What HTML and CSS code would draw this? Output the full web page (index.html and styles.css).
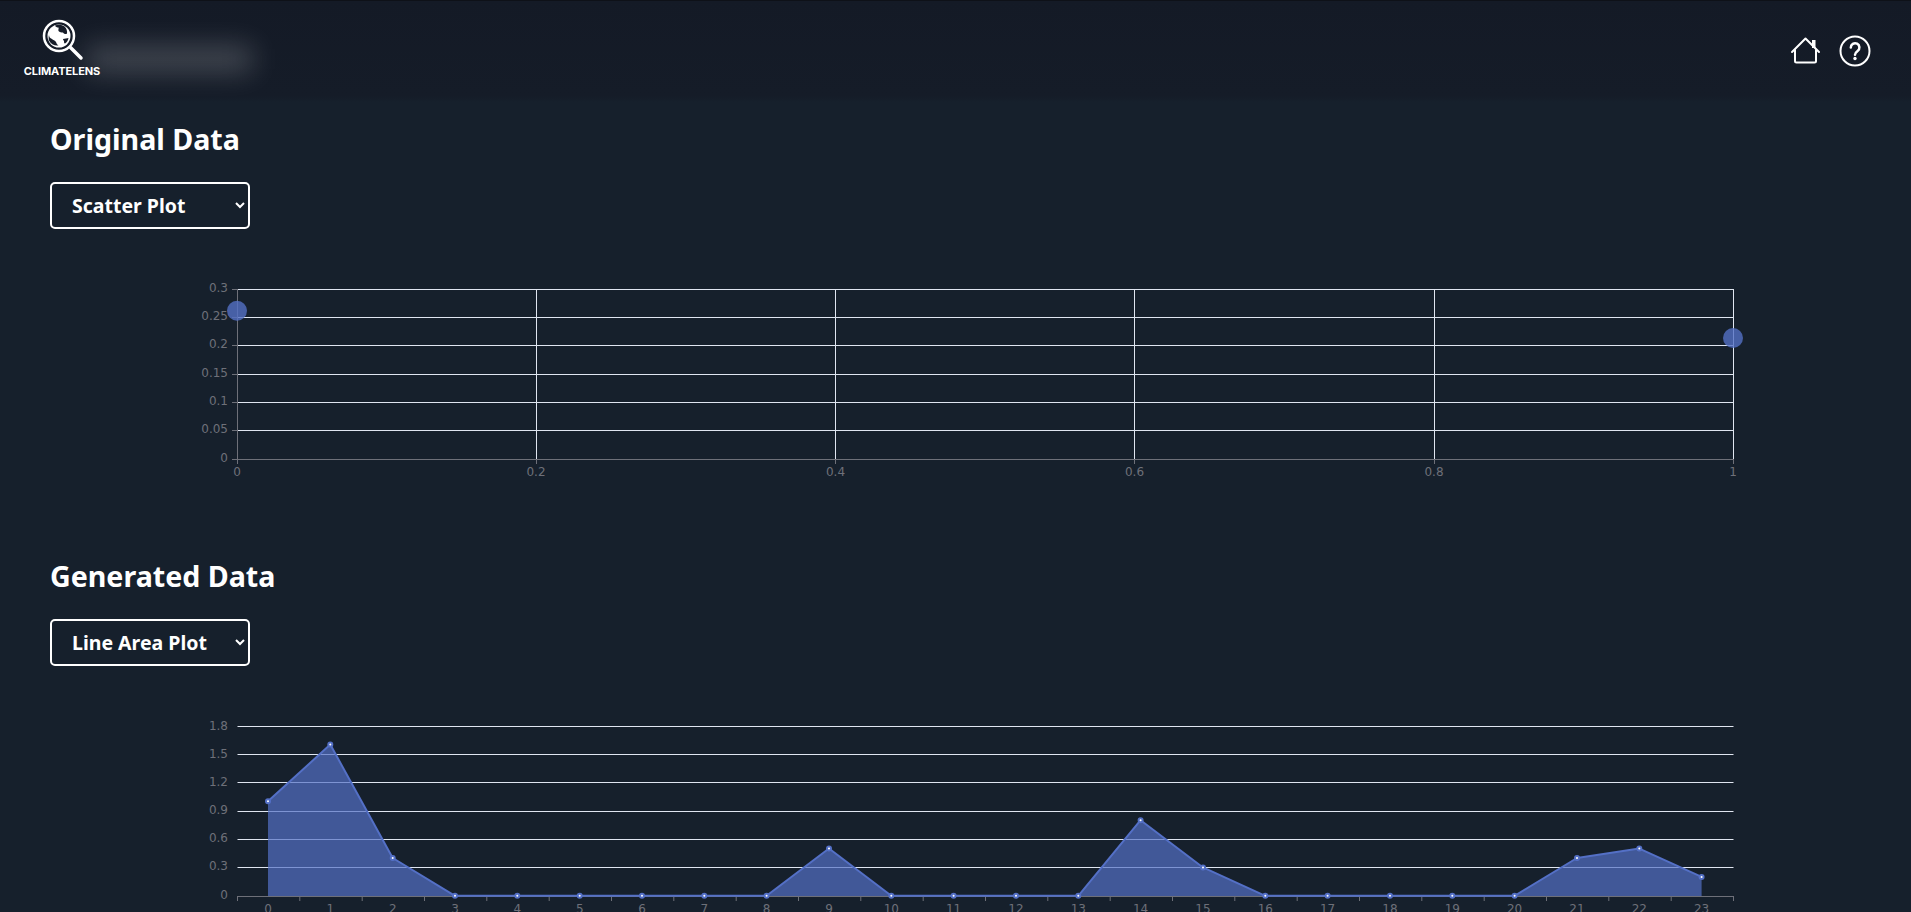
FILE: index.html

```html
<!DOCTYPE html>
<html lang="en">
<head>
  <meta charset="UTF-8" />
  <meta name="viewport" content="width=device-width, initial-scale=1" />
  <title>ClimateLens</title>
  <link rel="stylesheet" href="styles.css">
</head>
<body>

  <header class="topbar">
    <div class="brand">
      <svg class="brand-icon" viewBox="0 0 44 44" aria-hidden="true">
        <circle class="lens" cx="18" cy="18" r="15" />
        <circle class="globe" cx="18" cy="18" r="11.500" />
        <path class="land" d="M14 7.500c3-1.500 7-1 9.500 1 2 2 3 4.500 2.500 7-1.500 1-3 .5-4-1-1.500 0-3.500 0-4.500-1.500-.5-1.500 .5-2.500 0-3.500-1.500 0-3-.5-3.500-2z" />
        <path class="land" d="M8 17c0 2 1 3 3 4 1 1 3 1.500 4 3 .5 1.500 1 2.500 2.500 3.500-4 .5-8-1.500-9.500-5-.5-1.500-.5-4 0-5.500z" />
        <path class="land" d="M22 21c2-.5 4-.5 5.500-1-.5 2.500-1.500 4.500-3.500 5.500-1 0-1-1.500-1-2.500-.5-.5-1-1.500-1-2z" />
        <path class="handle" d="M29.500 29.500 L40 40" />
      </svg>
      <span class="brand-name">CLIMATELENS</span>
    </div>
    <div class="blurred"></div>

    <nav class="top-icons">
      <svg class="icon" viewBox="0 0 32 32" aria-label="Home">
        <path d="M2 17 L15.500 3.500 L29 17" />
        <path d="M5 15 V26 Q5 27.500 6.500 27.500 H24.500 Q26 27.500 26 26 V15" />
        <rect class="solid" x="22" y="5" width="3.500" height="8" />
      </svg>
      <svg class="icon" viewBox="0 0 32 32" aria-label="Help">
        <circle cx="16" cy="16" r="14.500" />
        <path class="mark" d="M11.800 12.500 a4.300 4.300 0 1 1 6.800 3.500 c-1.800 1.300 -2.600 2 -2.600 3.800" />
        <circle class="solid" cx="16" cy="23.500" r="1.700" />
      </svg>
    </nav>
  </header>

  <main>
    <section class="panel">
      <h2>Original Data</h2>
      <select class="plot-select">
        <option selected>Scatter Plot</option>
        <option>Line Area Plot</option>
      </select>

      <svg class="chart" viewBox="0 0 1811 260">
        <g class="split">
          <line x1="187.500" x2="1683.500" y1="40.500" y2="40.500" />
          <line x1="187.500" x2="1683.500" y1="68.500" y2="68.500" />
          <line x1="187.500" x2="1683.500" y1="96.500" y2="96.500" />
          <line x1="187.500" x2="1683.500" y1="125.500" y2="125.500" />
          <line x1="187.500" x2="1683.500" y1="153.500" y2="153.500" />
          <line x1="187.500" x2="1683.500" y1="181.500" y2="181.500" />
          <line x1="486.500" x2="486.500" y1="40" y2="210" />
          <line x1="785.500" x2="785.500" y1="40" y2="210" />
          <line x1="1084.500" x2="1084.500" y1="40" y2="210" />
          <line x1="1384.500" x2="1384.500" y1="40" y2="210" />
          <line x1="1683.500" x2="1683.500" y1="40" y2="210" />
        </g>
        <g class="axis">
          <line x1="187.500" x2="187.500" y1="40" y2="210.500" />
          <line x1="187" x2="1684" y1="210.500" y2="210.500" />
          <line x1="182" x2="187" y1="40.500" y2="40.500" />
          <line x1="182" x2="187" y1="68.500" y2="68.500" />
          <line x1="182" x2="187" y1="96.500" y2="96.500" />
          <line x1="182" x2="187" y1="125.500" y2="125.500" />
          <line x1="182" x2="187" y1="153.500" y2="153.500" />
          <line x1="182" x2="187" y1="181.500" y2="181.500" />
          <line x1="182" x2="187" y1="210.500" y2="210.500" />
          <line x1="187.500" x2="187.500" y1="210" y2="215" />
          <line x1="486.500" x2="486.500" y1="210" y2="215" />
          <line x1="785.500" x2="785.500" y1="210" y2="215" />
          <line x1="1084.500" x2="1084.500" y1="210" y2="215" />
          <line x1="1384.500" x2="1384.500" y1="210" y2="215" />
          <line x1="1683.500" x2="1683.500" y1="210" y2="215" />
        </g>
        <g class="labels y-labels">
          <text x="178" y="43">0.3</text>
          <text x="178" y="71">0.25</text>
          <text x="178" y="99">0.2</text>
          <text x="178" y="128">0.15</text>
          <text x="178" y="156">0.1</text>
          <text x="178" y="184">0.05</text>
          <text x="178" y="213">0</text>
        </g>
        <g class="labels x-labels">
          <text x="187" y="227">0</text>
          <text x="486" y="227">0.2</text>
          <text x="785.500" y="227">0.4</text>
          <text x="1084.500" y="227">0.6</text>
          <text x="1384" y="227">0.8</text>
          <text x="1683" y="227">1</text>
        </g>
        <circle class="scatter-dot" cx="187" cy="61.700" r="10" />
        <circle class="scatter-dot" cx="1683" cy="89" r="10" />
      </svg>
    </section>

    <section class="panel">
      <h2>Generated Data</h2>
      <select class="plot-select">
        <option>Scatter Plot</option>
        <option selected>Line Area Plot</option>
      </select>

      <svg class="chart" viewBox="0 0 1811 260">
        <g class="split">
          <line x1="187.500" x2="1683.500" y1="40.500" y2="40.500" />
          <line x1="187.500" x2="1683.500" y1="68.500" y2="68.500" />
          <line x1="187.500" x2="1683.500" y1="96.500" y2="96.500" />
          <line x1="187.500" x2="1683.500" y1="125.500" y2="125.500" />
          <line x1="187.500" x2="1683.500" y1="153.500" y2="153.500" />
          <line x1="187.500" x2="1683.500" y1="181.500" y2="181.500" />
        </g>
        <g class="axis">
          <line x1="187" x2="1684" y1="210.500" y2="210.500" />
          <line x1="187.500" x2="187.500" y1="210" y2="215" />
          <line x1="249.800" x2="249.800" y1="210" y2="215" />
          <line x1="312.200" x2="312.200" y1="210" y2="215" />
          <line x1="374.500" x2="374.500" y1="210" y2="215" />
          <line x1="436.800" x2="436.800" y1="210" y2="215" />
          <line x1="499.200" x2="499.200" y1="210" y2="215" />
          <line x1="561.500" x2="561.500" y1="210" y2="215" />
          <line x1="623.800" x2="623.800" y1="210" y2="215" />
          <line x1="686.200" x2="686.200" y1="210" y2="215" />
          <line x1="748.500" x2="748.500" y1="210" y2="215" />
          <line x1="810.800" x2="810.800" y1="210" y2="215" />
          <line x1="873.200" x2="873.200" y1="210" y2="215" />
          <line x1="935.500" x2="935.500" y1="210" y2="215" />
          <line x1="997.800" x2="997.800" y1="210" y2="215" />
          <line x1="1060.200" x2="1060.200" y1="210" y2="215" />
          <line x1="1122.500" x2="1122.500" y1="210" y2="215" />
          <line x1="1184.800" x2="1184.800" y1="210" y2="215" />
          <line x1="1247.200" x2="1247.200" y1="210" y2="215" />
          <line x1="1309.500" x2="1309.500" y1="210" y2="215" />
          <line x1="1371.800" x2="1371.800" y1="210" y2="215" />
          <line x1="1434.200" x2="1434.200" y1="210" y2="215" />
          <line x1="1496.500" x2="1496.500" y1="210" y2="215" />
          <line x1="1558.800" x2="1558.800" y1="210" y2="215" />
          <line x1="1621.200" x2="1621.200" y1="210" y2="215" />
          <line x1="1683.500" x2="1683.500" y1="210" y2="215" />
        </g>
        <g class="labels y-labels">
          <text x="178" y="43.500">1.8</text>
          <text x="178" y="71.500">1.5</text>
          <text x="178" y="99.500">1.2</text>
          <text x="178" y="128">0.9</text>
          <text x="178" y="156">0.6</text>
          <text x="178" y="184">0.3</text>
          <text x="178" y="213">0</text>
        </g>
        <g class="labels x-labels">
          <text x="218" y="226.500">0</text>
          <text x="280.300" y="226.500">1</text>
          <text x="342.700" y="226.500">2</text>
          <text x="405" y="226.500">3</text>
          <text x="467.300" y="226.500">4</text>
          <text x="529.700" y="226.500">5</text>
          <text x="592" y="226.500">6</text>
          <text x="654.300" y="226.500">7</text>
          <text x="716.600" y="226.500">8</text>
          <text x="779" y="226.500">9</text>
          <text x="841.300" y="226.500">10</text>
          <text x="903.600" y="226.500">11</text>
          <text x="966" y="226.500">12</text>
          <text x="1028.300" y="226.500">13</text>
          <text x="1090.600" y="226.500">14</text>
          <text x="1153" y="226.500">15</text>
          <text x="1215.300" y="226.500">16</text>
          <text x="1277.600" y="226.500">17</text>
          <text x="1340" y="226.500">18</text>
          <text x="1402.300" y="226.500">19</text>
          <text x="1464.600" y="226.500">20</text>
          <text x="1527" y="226.500">21</text>
          <text x="1589.300" y="226.500">22</text>
          <text x="1651.600" y="226.500">23</text>
        </g>
        <polygon class="area" points="218,115.300 280.300,58.600 342.700,172 405,209.800 467.300,209.800 529.700,209.800 592,209.800 654.300,209.800 716.600,209.800 779,162.550 841.300,209.800 903.600,209.800 966,209.800 1028.300,209.800 1090.600,134.200 1153,181.450 1215.300,209.800 1277.600,209.800 1340,209.800 1402.300,209.800 1464.600,209.800 1527,172 1589.300,162.550 1651.600,190.900 1651.600,210 218,210" />
        <polyline class="area-line" points="218,115.300 280.300,58.600 342.700,172 405,209.800 467.300,209.800 529.700,209.800 592,209.800 654.300,209.800 716.600,209.800 779,162.550 841.300,209.800 903.600,209.800 966,209.800 1028.300,209.800 1090.600,134.200 1153,181.450 1215.300,209.800 1277.600,209.800 1340,209.800 1402.300,209.800 1464.600,209.800 1527,172 1589.300,162.550 1651.600,190.900" />
        <g class="points">
          <circle cx="218" cy="115.300" r="2" />
          <circle cx="280.300" cy="58.600" r="2" />
          <circle cx="342.700" cy="172" r="2" />
          <circle cx="405" cy="209.800" r="2" />
          <circle cx="467.300" cy="209.800" r="2" />
          <circle cx="529.700" cy="209.800" r="2" />
          <circle cx="592" cy="209.800" r="2" />
          <circle cx="654.300" cy="209.800" r="2" />
          <circle cx="716.600" cy="209.800" r="2" />
          <circle cx="779" cy="162.550" r="2" />
          <circle cx="841.300" cy="209.800" r="2" />
          <circle cx="903.600" cy="209.800" r="2" />
          <circle cx="966" cy="209.800" r="2" />
          <circle cx="1028.300" cy="209.800" r="2" />
          <circle cx="1090.600" cy="134.200" r="2" />
          <circle cx="1153" cy="181.450" r="2" />
          <circle cx="1215.300" cy="209.800" r="2" />
          <circle cx="1277.600" cy="209.800" r="2" />
          <circle cx="1340" cy="209.800" r="2" />
          <circle cx="1402.300" cy="209.800" r="2" />
          <circle cx="1464.600" cy="209.800" r="2" />
          <circle cx="1527" cy="172" r="2" />
          <circle cx="1589.300" cy="162.550" r="2" />
          <circle cx="1651.600" cy="190.900" r="2" />
        </g>
      </svg>
    </section>
  </main>

</body>
</html>
```

FILE: styles.css

```css
html {
  overflow: hidden;
}

body {
  margin: 0;
  background-color: #16202c;
  color: white;
  font-family: "Noto Sans", sans-serif;
}

/* barra do topo */
.topbar {
  height: 102px;
  box-sizing: border-box;
  padding: 18px 40px 0 23px;
  display: flex;
  background: linear-gradient(#141a26, #151c28 94%, #16202c);
  border-top: 1px solid #0e1118;
}

.brand {
  width: 78px;
  display: flex;
  flex-direction: column;
  align-items: center;
  margin-top: -1px;
  position: relative;
  z-index: 1;
}

.brand-icon {
  width: 44px;
  height: 44px;
  margin-left: 2px;
}
.lens {
  fill: none;
  stroke: white;
  stroke-width: 2.500;
}
.globe {
  fill: white;
}
.land {
  fill: #171d29;
}
.handle {
  fill: none;
  stroke: white;
  stroke-width: 3.500;
  stroke-linecap: round;
}

.brand-name {
  font-family: Inter, sans-serif;
  font-weight: 700;
  font-size: 11px;
  letter-spacing: -0.1px;
  margin-top: 2px;
}

.blurred {
  width: 165px;
  height: 24px;
  margin: 28px 0 0 -14px;
  background-color: rgba(255, 255, 255, 0.22);
  filter: blur(14px);
}

.top-icons {
  margin-left: auto;
  margin-top: 16px;
  display: flex;
  gap: 17px;
  height: 32px;
}
.icon {
  width: 32px;
  height: 32px;
  fill: none;
  stroke: white;
  stroke-width: 2;
  stroke-linejoin: round;
  stroke-linecap: round;
}
.icon .mark {
  stroke-width: 2.500;
}
.icon .solid {
  fill: white;
  stroke: none;
}

/* secoes com grafico */
.panel {
  height: 437px;
  padding: 0 50px;
}

h2 {
  margin: 0;
  padding-top: 16px;
  height: 64px;
  box-sizing: border-box;
  font-size: 28.600px;
  line-height: 41px;
  font-weight: 700;
}

.plot-select {
  display: block;
  width: 200px;
  height: 47px;
  box-sizing: border-box;
  padding: 0 16px;
  background-color: #16202c;
  color: white;
  border: 2px solid white;
  border-radius: 5px;
  font-family: "Noto Sans", sans-serif;
  font-size: 19.500px;
  font-weight: 700;
  margin-top: 16px;
}

.chart {
  display: block;
  width: 1811px;
  height: 260px;
  margin-top: 20px;
}

.split line {
  stroke: #e0e6f1;
  stroke-width: 1;
}
.axis line {
  stroke: #6e7079;
  stroke-width: 1;
}

.labels text {
  fill: #6e7079;
  font-family: "DejaVu Sans", sans-serif;
  font-size: 12px;
}
.y-labels text {
  text-anchor: end;
}
.x-labels text {
  text-anchor: middle;
}

.scatter-dot {
  fill: #5470c6;
  opacity: 0.8;
}
.area {
  fill: #5470c6;
  opacity: 0.7;
}
.area-line {
  fill: none;
  stroke: #5470c6;
  stroke-width: 2;
  stroke-linejoin: bevel;
}
.points circle {
  fill: white;
  stroke: #5470c6;
  stroke-width: 2;
}
```
